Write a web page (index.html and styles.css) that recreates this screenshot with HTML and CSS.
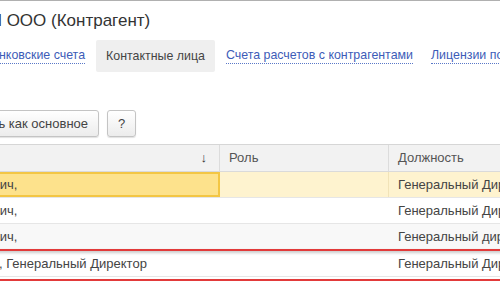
FILE: index.html
```html
<!DOCTYPE html>
<html lang="ru">
<head>
  <meta charset="UTF-8">
  <meta name="viewport" content="width=device-width, initial-scale=1.0">
  <title>ЭЛЕКТРОН ООО (Контрагент)</title>
  <link rel="stylesheet" href="styles.css">
</head>
<body>

  <div class="page">
    <h1 class="title"><span class="title-name">ЭЛЕКТРОН</span> ООО (Контрагент)</h1>

    <nav class="tabs">
      <a class="tab-link first" href="#">Банковские счета</a>
      <span class="tab active">Контактные лица</span>
      <a class="tab-link" href="#">Счета расчетов с контрагентами</a>
      <a class="tab-link" href="#">Лицензии поставщика алкогольной продукции</a>
    </nav>

    <div class="toolbar">
      <button class="btn btn-main">Установить как основное</button>
      <button class="btn btn-help">?</button>
    </div>

    <div class="grid">
      <div class="row head">
        <div class="cell c-name">Представление <span class="sort">↓</span></div>
        <div class="cell">Роль</div>
        <div class="cell">Должность</div>
      </div>
      <div class="row selected">
        <div class="cell c-name">Смирнов Павел Кузьмич,</div>
        <div class="cell"></div>
        <div class="cell">Генеральный Директор</div>
      </div>
      <div class="row">
        <div class="cell c-name">Смирнов Павел Кузьмич,</div>
        <div class="cell"></div>
        <div class="cell">Генеральный Директор</div>
      </div>
      <div class="row alt">
        <div class="cell c-name">Смирнов Павел Кузьмич,</div>
        <div class="cell"></div>
        <div class="cell">Генеральный директор</div>
      </div>
      <div class="marked">
        <div class="row">
          <div class="cell c-name">Смирнов Юрий Ильич, Генеральный Директор</div>
          <div class="cell"></div>
          <div class="cell">Генеральный Директор</div>
        </div>
      </div>
    </div>
  </div>

</body>
</html>
```

FILE: styles.css
```css
* {
  box-sizing: border-box;
}

body {
  margin: 0;
  overflow: hidden;
  font-family: "Liberation Sans", Arial, sans-serif;
  font-size: 13px;
  color: #444;
  background: #fff;
}

.page {
  border-top: 1px solid #b0b0b0;
}

.title {
  margin: 0 0 0 -89px;
  font-size: 17px;
  font-weight: normal;
  line-height: 39px;
  color: #333;
  white-space: nowrap;
}

.tabs {
  display: flex;
  align-items: center;
  height: 32px;
  font-size: 12.4px;
  white-space: nowrap;
}

.tab-link {
  margin: 0 9px;
  color: #3d5cb8;
  text-decoration: none;
  border-bottom: 1px dotted #5a78c8;
  line-height: 15px;
}

.tab-link.first {
  margin-left: -16px;
}

.tab {
  margin: 0 2px;
  padding: 0 10px;
  line-height: 32px;
  color: #444;
}

.tab.active {
  background: #efefef;
  border-radius: 2px;
}

.toolbar {
  display: flex;
  gap: 8px;
  margin-top: 38px;
  margin-left: -74px;
}

.btn {
  height: 27px;
  padding: 0 10px;
  font-family: inherit;
  font-size: 13px;
  color: #444;
  background: linear-gradient(#ffffff, #ececec);
  border: 1px solid #c4c4c4;
  border-radius: 3px;
  box-shadow: 0 1px 1px rgba(0, 0, 0, 0.12);
  white-space: nowrap;
}

.btn-help {
  width: 29px;
  padding: 0;
}

.grid {
  width: 844px;
  margin-top: 7px;
  margin-left: -144px;
}

.row {
  display: grid;
  grid-template-columns: 364px 169px 311px;
  height: 26px;
  border-bottom: 1px solid #e6e6e6;
}

.cell {
  padding: 0 9px;
  line-height: 25px;
  white-space: nowrap;
  overflow: hidden;
}

.row.head {
  height: 28px;
  background: #f2f2f2;
  border-top: 1px solid #d6d6d6;
  border-bottom: 1px solid #dadada;
  color: #555;
}

.row.head .cell {
  line-height: 26px;
  border-right: 1px solid #dcdcdc;
}

.row.head .c-name {
  display: flex;
  justify-content: space-between;
  padding-right: 12px;
}

.sort {
  color: #333;
}

.row.selected {
  background: #fef3cf;
}

.row.selected .c-name {
  background: #fde28c;
  border: 2px solid #f3c644;
  line-height: 21px;
  padding-left: 7px;
}

.row.selected .cell:nth-child(2) {
  border-right: 1px solid #f1e3b8;
}

.row.alt {
  background: #f8f8f8;
}

/* рамка выделения строки */
.marked {
  margin-top: -1px;
  padding-bottom: 2px;
  border-top: 2px solid #e23a3a;
  border-bottom: 2px solid #e23a3a;
  box-shadow: 0 2px 3px rgba(0, 0, 0, 0.3), inset 0 2px 3px rgba(0, 0, 0, 0.2);
}
```
